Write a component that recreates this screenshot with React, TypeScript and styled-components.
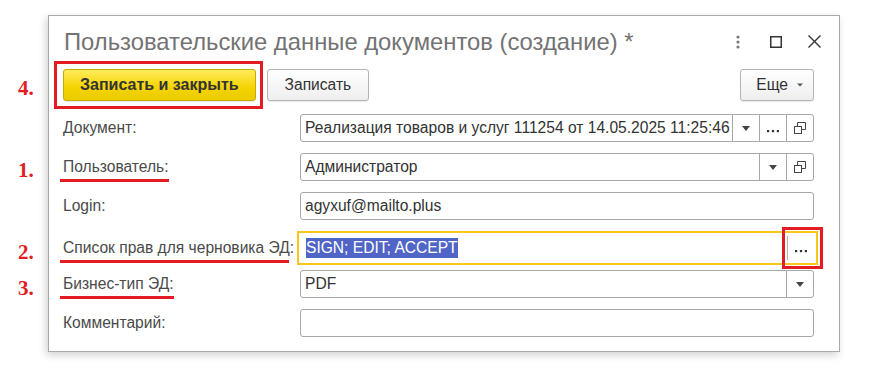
import React from "react";
import styled, { createGlobalStyle, css } from "styled-components";

const GlobalStyle = createGlobalStyle`
  body {
    margin: 0;
    background: #ffffff;
    font-family: "Liberation Sans", Arial, sans-serif;
  }
`;

const Page = styled.div`
  padding: 15px 0 0 48px;
  width: 876px;
  height: 375px;
  box-sizing: border-box;
`;

const Dialog = styled.div`
  width: 792px;
  box-sizing: border-box;
  border: 1px solid #a9a9a9;
  background: #fff;
  box-shadow: -2px 3px 8px rgba(0, 0, 0, 0.18);
  padding: 0 25px 14px 14px;
`;

const Header = styled.div`
  height: 51px;
  display: flex;
  align-items: center;
  margin-right: -7px;
`;

const Title = styled.h1`
  flex: 1;
  margin: 0 0 0 1px;
  font-weight: normal;
  font-size: 23.8px;
  color: #737373;
  white-space: nowrap;
`;

const HeaderIcons = styled.div`
  display: flex;
  align-items: center;
  margin-right: 0;

  & > svg + svg {
    margin-left: 30px;
  }
  & > svg:last-child {
    margin-left: 26px;
  }
`;

const Toolbar = styled.div`
  display: flex;
  align-items: center;
  gap: 11px;
  margin-top: 2px;
`;

const Button = styled.button<{ $primary?: boolean }>`
  position: relative;
  height: 32px;
  padding: 0 17px;
  border-radius: 3px;
  font-family: inherit;
  font-size: 15.6px;
  display: flex;
  align-items: center;
  gap: 9px;
  color: #333;
  border: 1px solid #b4b4b4;
  background: linear-gradient(#ffffff, #eeeeee);
  box-shadow: 0 1px 1px rgba(0, 0, 0, 0.08);
  ${(p) =>
    p.$primary &&
    css`
      font-weight: bold;
      font-size: 16px;
      padding: 0 16px;
      border-color: #c7a900;
      background: linear-gradient(#ffec5c, #f4d300 60%, #eccb00);
    `}
`;

const MenuButton = styled(Button)`
  padding: 0 10px 0 15px;
`;

const Spacer = styled.div`
  flex: 1;
`;

const Form = styled.div`
  display: flex;
  flex-direction: column;
  gap: 11px;
  margin-top: 13px;
`;

const Row = styled.div`
  position: relative;
  display: grid;
  grid-template-columns: 237px 1fr;
  align-items: center;
  height: 28px;
`;

const Label = styled.span<{ $marked?: boolean; $cut?: number }>`
  position: relative;
  justify-self: start;
  font-size: 15.6px;
  color: #4a4a4a;
  white-space: nowrap;
  ${(p) =>
    p.$marked &&
    css`
      &::after {
        content: "";
        position: absolute;
        left: -3px;
        right: ${p.$cut ?? 0}px;
        bottom: -6px;
        height: 3px;
        background: #e31b23;
      }
    `}
`;

const Field = styled.div<{ $focused?: boolean }>`
  display: flex;
  align-items: stretch;
  height: 28px;
  box-sizing: border-box;
  border: 1px solid #a8a8a8;
  border-radius: 3px;
  background: #fff;
  overflow: hidden;
  ${(p) =>
    p.$focused &&
    css`
      height: 34px;
      margin: 0 -4px 0 -3px;
      border: 2px solid #f7c71a;
      border-radius: 0;
      overflow: visible;
      padding: 3px 2px 3px 3px;
    `}
`;

const Value = styled.div`
  flex: 1;
  display: flex;
  align-items: center;
  padding-left: 4px;
  font-size: 15.6px;
  color: #333;
  white-space: nowrap;
  overflow: hidden;
`;

const Selected = styled.span`
  background: #5065c5;
  color: #fff;
  padding: 1px 0;
`;

const FieldButton = styled.div<{ $plain?: boolean }>`
  position: relative;
  width: 26px;
  flex: none;
  display: flex;
  align-items: center;
  justify-content: center;
  border-left: 1px solid #a8a8a8;
  ${(p) =>
    p.$plain &&
    css`
      border-left-color: #b0b0b0;
    `}
`;

const Marker = styled.span<{ $dy?: number }>`
  position: absolute;
  left: -45px;
  top: 50%;
  transform: translateY(calc(-50% + ${(p) => p.$dy ?? 3}px));
  font-family: "Liberation Serif", "Times New Roman", serif;
  font-weight: bold;
  font-size: 21px;
  color: #e31b23;
`;

const Frame = styled.span`
  position: absolute;
  left: -10px;
  top: -9px;
  right: -8px;
  bottom: -9px;
  border: 3px solid #e31b23;
  pointer-events: none;
`;

const ButtonFrame = styled(Frame)`
  left: -6px;
  top: -9px;
  right: -9px;
  bottom: -9px;
`;

const Arrow = ({ small }: { small?: boolean }) =>
  small ? (
    <svg width="6" height="4" viewBox="0 0 6 4">
      <path d="M0 0.5h6L3 3.5z" fill="#555" />
    </svg>
  ) : (
    <svg width="8" height="5" viewBox="0 0 8 5">
      <path d="M0 0h8L4 5z" fill="#444" />
    </svg>
  );

const Dots = () => (
  <svg width="12" height="12" viewBox="0 0 12 12">
    <rect x="0" y="8" width="2.2" height="2.2" fill="#333" />
    <rect x="4.9" y="8" width="2.2" height="2.2" fill="#333" />
    <rect x="9.8" y="8" width="2.2" height="2.2" fill="#333" />
  </svg>
);

const OpenIcon = () => (
  <svg width="12" height="12" viewBox="0 0 12 12" fill="none" stroke="#444">
    <rect x="0.5" y="4.5" width="7" height="7" />
    <path d="M3.5 4.5V0.5h8v7h-4" />
  </svg>
);

const MoreIcon = () => (
  <svg width="4" height="14" viewBox="0 0 4 14">
    <circle cx="2" cy="2" r="1.6" fill="#7a7a7a" />
    <circle cx="2" cy="7" r="1.6" fill="#7a7a7a" />
    <circle cx="2" cy="12" r="1.6" fill="#7a7a7a" />
  </svg>
);

const MaximizeIcon = () => (
  <svg width="12" height="12" viewBox="0 0 12 12">
    <rect x="0.75" y="0.75" width="10.5" height="10.5" fill="none" stroke="#333" strokeWidth="1.5" />
  </svg>
);

const CloseIcon = () => (
  <svg width="13" height="13" viewBox="0 0 13 13">
    <path d="M0.5 0.5l12 12M12.5 0.5l-12 12" stroke="#333" strokeWidth="1.4" />
  </svg>
);

export default function App() {
  return (
    <>
      <GlobalStyle />
      <Page>
        <Dialog>
          <Header>
            <Title>Пользовательские данные документов (создание) *</Title>
            <HeaderIcons>
              <MoreIcon />
              <MaximizeIcon />
              <CloseIcon />
            </HeaderIcons>
          </Header>

          <Toolbar>
            <Button $primary>
              Записать и закрыть
              <Frame />
              <Marker style={{ left: -46 }}>4.</Marker>
            </Button>
            <Button>Записать</Button>
            <Spacer />
            <MenuButton>
              Еще <Arrow small />
            </MenuButton>
          </Toolbar>

          <Form>
            <Row>
              <Label>Документ:</Label>
              <Field>
                <Value>Реализация товаров и услуг 111254 от 14.05.2025 11:25:46</Value>
                <FieldButton>
                  <Arrow />
                </FieldButton>
                <FieldButton>
                  <Dots />
                </FieldButton>
                <FieldButton>
                  <OpenIcon />
                </FieldButton>
              </Field>
            </Row>

            <Row>
              <Marker>1.</Marker>
              <Label $marked>Пользователь:</Label>
              <Field>
                <Value>Администратор</Value>
                <FieldButton>
                  <Arrow />
                </FieldButton>
                <FieldButton>
                  <OpenIcon />
                </FieldButton>
              </Field>
            </Row>

            <Row>
              <Label>Login:</Label>
              <Field>
                <Value>agyxuf@mailto.plus</Value>
              </Field>
            </Row>

            <Row>
              <Marker $dy={7}>2.</Marker>
              <Label $marked $cut={5}>
                Список прав для черновика ЭД:
              </Label>
              <Field $focused>
                <Value>
                  <Selected>SIGN; EDIT; ACCEPT</Selected>
                </Value>
                <FieldButton $plain>
                  <Dots />
                  <ButtonFrame />
                </FieldButton>
              </Field>
            </Row>

            <Row>
              <Marker $dy={4}>3.</Marker>
              <Label $marked>Бизнес-тип ЭД:</Label>
              <Field>
                <Value>PDF</Value>
                <FieldButton>
                  <Arrow />
                </FieldButton>
              </Field>
            </Row>

            <Row>
              <Label>Комментарий:</Label>
              <Field />
            </Row>
          </Form>
        </Dialog>
      </Page>
    </>
  );
}
